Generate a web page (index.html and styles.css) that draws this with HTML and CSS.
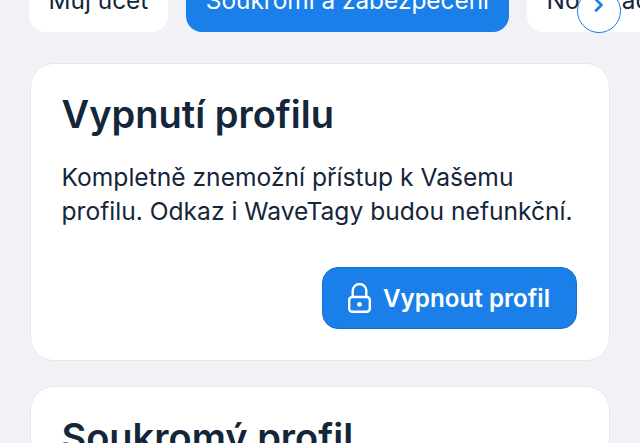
FILE: index.html
```html
<!DOCTYPE html>
<html lang="cs">
<head>
<meta charset="utf-8">
<title>Nastavení</title>
<link rel="stylesheet" href="styles.css">
</head>
<body>
<div class="tabs-wrap">
  <nav class="tabs">
    <a class="tab">Můj účet</a>
    <a class="tab active">Soukromí a zabezpečení</a>
    <a class="tab">Notifikace</a>
  </nav>
  <button class="scroll-btn" aria-label="Další">
    <svg width="10" height="14" viewBox="0 0 10 14" fill="none"><path d="M2 1.5 7.5 7 2 12.5" stroke="#1a7fe8" stroke-width="2.6" stroke-linecap="round" stroke-linejoin="round"/></svg>
  </button>
</div>
<main class="content">
  <section class="card">
    <h2 class="card-title">Vypnutí profilu</h2>
    <p class="card-text">Kompletně znemožní přístup k Vašemu profilu. Odkaz i WaveTagy budou nefunkční.</p>
    <div class="card-actions">
      <button class="btn">
        <svg class="btn-icon" width="23" height="30" viewBox="0 0 23 30" fill="none"><rect x="1.2" y="14" width="20.6" height="14.8" rx="3" stroke="#fff" stroke-width="2.4"/><path d="M4.7 14V7.8a6.8 6.8 0 0 1 13.6 0V14" stroke="#fff" stroke-width="2.4"/><circle cx="11.5" cy="21.4" r="2.4" fill="#fff"/></svg>
        <span>Vypnout profil</span>
      </button>
    </div>
  </section>
  <section class="card">
    <h2 class="card-title">Soukromý profil</h2>
  </section>
</main>
</body>
</html>
```
FILE: styles.css
```css
html, body { margin: 0; padding: 0; height: 443px; overflow: hidden; }
body { background: #f0f2f6; font-family: Inter, "Liberation Sans", sans-serif; color: #14263a; }
.tabs-wrap { position: relative; height: 32px; }
.tabs { display: flex; align-items: flex-end; gap: 18.5px; height: 32px; padding-left: 29px; overflow: hidden; }
.tab { flex: none; display: flex; align-items: center; height: 64px; padding: 0 19.5px; background: #fff; border-radius: 16px; font-size: 24.4px; color: #14263a; white-space: nowrap; }
.tab.active { background: #1a7fe8; color: #fff; }
.scroll-btn { position: absolute; left: 577px; top: -11px; box-sizing: border-box; width: 44px; height: 44px; padding: 0 0 12px; display: flex; align-items: center; justify-content: center; border: 1.5px solid #1a7fe8; border-radius: 50%; background: #fff; }
.content { display: flex; flex-direction: column; gap: 25.5px; padding: 31px 30.5px 0 29.5px; }
.card { box-sizing: border-box; background: #fff; border: 1.5px solid #e4e9f0; border-radius: 24px; padding: 30.5px 31.5px 30.5px 31px; }
.card-title { margin: 0; font-size: 38px; line-height: 38px; font-weight: 600; color: #14263a; }
.card-text { margin: 27px 0 0; font-size: 24.6px; line-height: 34px; color: #14263a; }
.card-actions { display: flex; justify-content: flex-end; margin-top: 39.5px; }
.btn { display: flex; align-items: center; gap: 12px; box-sizing: border-box; height: 62px; padding: 0 26px 0 25px; background: #1a7fe8; border: 1px solid #1a6fc8; border-radius: 16px; color: #fff; font: 600 24.2px Inter, "Liberation Sans", sans-serif; }
```
